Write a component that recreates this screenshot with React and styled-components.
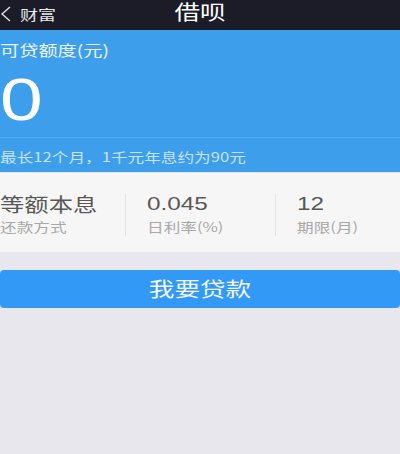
import React from "react";
import styled, { createGlobalStyle, css } from "styled-components";

const GlobalStyle = createGlobalStyle`
  html, body {
    margin: 0;
    padding: 0;
    background: #e9e7ee;
  }
  body {
    font-family: "Noto Sans CJK SC", "Liberation Sans", sans-serif;
    width: 400px;
    height: 454px;
    overflow: hidden;
  }
`;

// the screenshot is horizontally stretched, so text is widened to match
const wide = (origin = "left") => css`
  display: inline-block;
  transform: scaleX(1.28);
  transform-origin: ${origin} center;
  white-space: nowrap;
`;

const terms = [
  { value: "等额本息", label: "还款方式", big: true },
  { value: "0.045", label: "日利率(%)" },
  { value: "12", label: "期限(月)" },
];

const App = () => {
  return (
    <StyledPage>
      <GlobalStyle />
      <StyledNavBar>
        <StyledBack>
          <svg width="11" height="16" viewBox="0 0 11 16">
            <path d="M10 1 L2 8 L10 15" fill="none" stroke="#e8e8ee" strokeWidth="1.3" />
          </svg>
          <StyledBackText>财富</StyledBackText>
        </StyledBack>
        <StyledNavTitle>借呗</StyledNavTitle>
      </StyledNavBar>

      <StyledQuota>
        <StyledQuotaLabel>
          <span>可贷额度(元)</span>
        </StyledQuotaLabel>
        <StyledQuotaAmount>
          <span>0</span>
        </StyledQuotaAmount>
        <StyledQuotaNote>
          <span>最长12个月，1千元年息约为90元</span>
        </StyledQuotaNote>
      </StyledQuota>

      <StyledTerms>
        {terms.map((term, i) => (
          <StyledTerm key={term.label} first={i === 0}>
            <StyledTermValue big={term.big}>{term.value}</StyledTermValue>
            <StyledTermLabel>{term.label}</StyledTermLabel>
          </StyledTerm>
        ))}
      </StyledTerms>

      <StyledButton>
        <span>我要贷款</span>
      </StyledButton>
    </StyledPage>
  );
};

const StyledPage = styled.div`
  width: 400px;
  height: 454px;
  background: #e9e7ee;
  display: flex;
  flex-direction: column;
`;

const StyledNavBar = styled.div`
  position: relative;
  height: 30px;
  background: #1b1c27;
  display: flex;
  justify-content: center;
  align-items: flex-start;
`;

const StyledBack = styled.div`
  position: absolute;
  left: 0;
  top: 0;
  height: 27px;
  display: flex;
  align-items: center;
  gap: 9px;
  color: #e8e8ee;
`;

const StyledBackText = styled.span`
  font-size: 14px;
  line-height: 16px;
  margin-top: 1px;
  ${wide()}
`;

const StyledNavTitle = styled.div`
  color: #ffffff;
  font-size: 20px;
  line-height: 22px;
  margin-top: 1px;
  ${wide("center")}
`;

const StyledQuota = styled.div`
  background: #3d9eec;
  display: flex;
  flex-direction: column;
  padding-bottom: 8px;
`;

const StyledQuotaLabel = styled.div`
  margin-top: 12px;
  font-size: 15px;
  line-height: 16px;
  color: #eaf4fd;

  span {
    ${wide()}
  }
`;

const StyledQuotaAmount = styled.div`
  margin-top: 12px;
  margin-bottom: 7px;
  font-family: "Liberation Sans", sans-serif;
  font-size: 60px;
  line-height: 60px;
  height: 60px;
  color: #ffffff;

  span {
    ${wide()}
  }
`;

const StyledQuotaNote = styled.div`
  border-top: 1px solid #4fa8ef;
  padding-top: 12px;
  font-size: 13px;
  line-height: 14px;
  color: #c8e2fa;

  span {
    ${wide()}
  }
`;

const StyledTerms = styled.div`
  margin-top: 1px;
  height: 79px;
  box-sizing: border-box;
  padding-top: 21px;
  background: #f6f6f6;
  display: grid;
  grid-template-columns: 125px 150px 125px;
  align-items: start;
`;

const StyledTerm = styled.div`
  height: 42px;
  padding-left: ${(props) => (props.first ? "0" : "21px")};
  border-left: ${(props) => (props.first ? "none" : "1px solid #e4e4e4")};
  display: flex;
  flex-direction: column;
  align-items: flex-start;
  gap: 6px;
`;

const StyledTermValue = styled.div`
  font-family: ${(props) =>
    props.big ? '"Noto Sans CJK SC", sans-serif' : '"Liberation Sans", sans-serif'};
  font-size: 19px;
  line-height: 20px;
  color: #585858;
  ${wide()}
`;

const StyledTermLabel = styled.div`
  font-size: 13px;
  line-height: 14px;
  color: #a8a8a8;
  ${wide()}
`;

const StyledButton = styled.button`
  margin-top: 18px;
  height: 38px;
  width: 400px;
  border: none;
  border-radius: 4px;
  background: #3399f7;
  color: #f2f8ff;
  font-family: "Noto Sans CJK SC", sans-serif;
  font-size: 20px;
  line-height: 24px;
  padding: 0;
  display: flex;
  align-items: center;
  justify-content: center;

  span {
    ${wide("center")}
  }
`;

export default App;
